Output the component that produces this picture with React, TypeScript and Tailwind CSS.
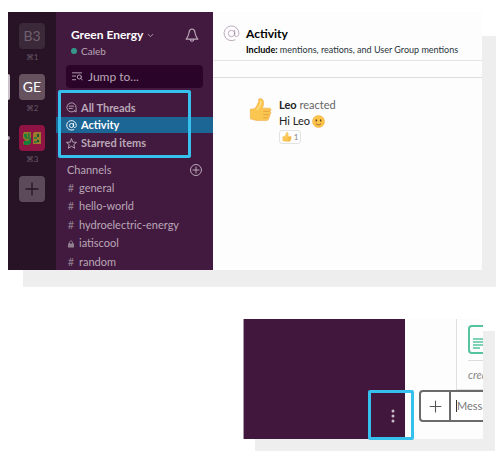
import type { ReactNode } from "react";

const workspaces = [
  { name: "B3", hint: "⌘1", style: "bg-[#3b2838] text-[#6f6170]" },
  { name: "GE", hint: "⌘2", style: "bg-[#66525f] text-white" },
];

const channels = ["general", "hello-world", "hydroelectric-energy", "iatiscool", "random"];

function Icon({ className, children }: { className: string; children: ReactNode }) {
  return (
    <svg viewBox="0 0 24 24" fill="none" stroke="currentColor" strokeWidth="2" strokeLinecap="round" strokeLinejoin="round" className={`shrink-0 ${className}`} aria-hidden="true">
      {children}
    </svg>
  );
}

function AtSign({ className }: { className: string }) {
  return (
    <Icon className={className}>
      <circle cx="12" cy="12" r="4.5" />
      <path d="M16.5 7.5V14c0 4 6 3 6-2A10.500 10.500 0 1 0 17 21" />
    </Icon>
  );
}

function Thumb({ className }: { className: string }) {
  return (
    <svg viewBox="0 0 24 26" className={`shrink-0 ${className}`} aria-hidden="true">
      <path d="M1 12c4 0 6-1 7-4 1-2 2-3 2-6 0-2 4-2 5 1 1 3 0 6-1 8h7c3 0 3 3 1 3.500 2 .5 1.500 3.500-.5 3.500 1.500 1 .5 3.500-1 3.500 1 1 0 3-2 3H11c-4 0-7-1-10-2Z" fill="#fbc650" stroke="#edaa42" strokeWidth=".6" />
      <path d="M15 14.500h7M15 18h6.500M15 21.500h5" stroke="#df9636" strokeWidth=".8" fill="none" />
      <path d="M12 3c1 4-1 7-4 10" stroke="#ffe08a" strokeWidth="1.500" fill="none" />
    </svg>
  );
}

function Smile({ className }: { className: string }) {
  return (
    <svg viewBox="0 0 24 24" className={className} aria-hidden="true">
      <circle cx="12" cy="12" r="11" fill="#fdc64b" stroke="#efa435" />
      <ellipse cx="8" cy="10" rx="1.500" ry="2.200" fill="#71421f" />
      <ellipse cx="16" cy="10" rx="1.500" ry="2.200" fill="#71421f" />
      <path d="M7 16c3 3 7 3 10 0" stroke="#8b5426" strokeWidth="1.500" fill="none" />
    </svg>
  );
}

function Rail() {
  return (
    <nav aria-label="Workspaces" className="relative flex w-12 shrink-0 flex-col items-center bg-[#271226] pt-[11px] text-[#655564]">
      <span className="absolute top-[62px] left-0 h-[26px] w-[2px] rounded-r bg-[#c9c1c8]" />
      <span className="absolute top-[124px] left-0 h-[4px] w-[2px] rounded-r bg-[#a89ca7]" />
      {workspaces.map((w) => (
        <div key={w.name} className="flex h-[51px] flex-col items-center">
          <button className={`h-[26px] w-[26px] rounded text-[14px] leading-[26px] ${w.style}`}>{w.name}</button>
          <span className="mt-[2px] text-[8px] leading-3">{w.hint}</span>
        </div>
      ))}
      <div className="flex h-[51px] flex-col items-center">
        <button aria-label="Third workspace" className="h-[26px] w-[26px] overflow-hidden rounded bg-[#8f1444]">
          <svg viewBox="0 0 26 26" aria-hidden="true">
            <path d="M5 7h7v10l-2 3H5l-1-3 3-1-3-3V9Z" fill="#8a7a2a" />
            <path d="M15 7h7v12h-8V9Z" fill="#9a7a2c" />
            <path d="M5 9h3v3H5ZM5 16h4l3-4v6l-3 2H5Z" fill="#15803a" />
            <path d="M10 8v5H6M15 13h3M15 17h3" stroke="#1f7a37" strokeWidth="1.500" fill="none" />
            <path d="M19 9v3M19 15v2" stroke="#1b5532" strokeWidth="2" />
          </svg>
        </button>
        <span className="mt-[2px] text-[8px] leading-3">⌘3</span>
      </div>
      <button aria-label="Add workspace" className="flex h-[26px] w-[26px] items-center justify-center rounded bg-[#5c4a5a] text-[#291428]">
        <Icon className="h-[16px] w-[16px]"><path d="M12 3v18M3 12h18" /></Icon>
      </button>
    </nav>
  );
}

function Sidebar() {
  return (
    <aside className="relative w-[157px] shrink-0 bg-[#431a3f] pt-[13px] text-[#b9a7b7]">
      <div className="flex items-start justify-between pr-[14px] pl-[15px]">
        <div>
          <button className="flex items-center gap-1 text-[12px] leading-5 font-bold text-white">
            Green Energy
            <Icon className="h-[7px] w-[7px] opacity-60"><path d="m4 8 8 8 8-8" strokeWidth="3" /></Icon>
          </button>
          <div className="flex items-center gap-1 text-[10px] leading-3">
            <span className="h-[6px] w-[6px] rounded-full bg-[#35978a]" />
            Caleb
          </div>
        </div>
        <button aria-label="Notifications" className="mt-[3px]">
          <Icon className="h-[14px] w-[14px]">
            <path d="M2 19c4-4 4-7 5-12 1-7 9-7 10 0 1 5 1 8 5 12ZM9 19c0 5 6 5 6 0" />
          </Icon>
        </button>
      </div>
      <button className="mx-[10px] mt-2 flex h-[23px] w-[137px] items-center gap-[5px] rounded bg-[#2b0529] pl-[6px] text-[12px]">
        <Icon className="h-[11px] w-[11px]"><path d="M1 4h20M1 11h7M1 19h7" /><circle cx="16" cy="13" r="4.500" /><path d="m19 16 4 4" /></Icon>
        Jump to...
      </button>
      <div className="mt-[10px] text-[11px] leading-[18px] font-bold">
        <a href="#threads" className="flex h-[19px] items-center gap-1 pl-[10px]">
          <Icon className="h-[11px] w-[11px]"><path d="M19 19A10 10 0 1 1 22 12v10l-4-3M7 9h10M7 14h7" /></Icon>
          All Threads
        </a>
        <a href="#activity" className="flex h-4 items-center gap-1 bg-[#1c6696] pl-[10px] text-white">
          <AtSign className="h-[11px] w-[11px]" />
          Activity
        </a>
        <a href="#starred" className="flex h-5 items-center gap-1 pl-[10px]">
          <Icon className="h-[11px] w-[11px]"><path d="m12 2 3 7 8 .5-6 5 2 8-7-4.500-7 4.500 2-8-6-5L9 9Z" /></Icon>
          Starred items
        </a>
      </div>
      <div className="mt-2 flex h-[18px] items-center justify-between pr-[11px] pl-[11px] text-[11px]">
        Channels
        <button aria-label="Add channel">
          <Icon className="h-[12px] w-[12px]"><circle cx="12" cy="12" r="11" /><path d="M12 6v12M6 12h12" /></Icon>
        </button>
      </div>
      <ul className="flex h-[92px] flex-col justify-between text-[11px]">
        {channels.map((c) => (
          <li key={c}>
            <a href={`#${c}`} className="flex h-[18px] items-center gap-1 pl-[11px]">
              <span className="flex w-[8px] justify-center text-[#917e8f]">
                {c === "iatiscool" ? (
                  <svg viewBox="0 0 12 14" className="h-[8px] w-[6px]" aria-hidden="true"><path d="M0 6h12v8H0Z" fill="currentColor" /><path d="M3 7V4c0-4 6-4 6 0v3" fill="none" stroke="currentColor" strokeWidth="2" /></svg>
                ) : "#"}
              </span>
              {c}
            </a>
          </li>
        ))}
      </ul>
      <div className="pointer-events-none absolute top-[78px] left-[2px] h-[68px] w-[133px] rounded-[2px] border-[3px] border-[#36c0ed]" />
    </aside>
  );
}

function ActivityPane() {
  return (
    <section className="min-w-0 flex-1">
      <header className="flex h-[49px] gap-[6px] border-b border-[#e5e3e5] pt-[13px] pl-[10px]">
        <AtSign className="h-[17px] w-[17px] stroke-1 text-[#a58aa3]" />
        <div>
          <h1 className="text-[12px] leading-[18px] font-bold text-black">Activity</h1>
          <p className="text-[9px] leading-[14px] whitespace-nowrap text-[#29333a]"><b className="text-black">Include:</b> mentions, reations, and User Group mentions</p>
        </div>
      </header>
      <div className="h-[17px] border-b border-[#dddddd]" />
      <article className="flex gap-[7px] pt-[19px] pl-9 text-[11px] leading-4 text-[#222]">
        <Thumb className="mt-px h-6 w-[23px]" />
        <div>
          <p className="text-[#666]"><b className="text-[#222]">Leo</b> reacted</p>
          <p className="flex items-center gap-[2px]">Hi Leo <Smile className="h-[13px] w-[13px]" /></p>
          <button className="mt-px flex h-[14px] w-[22px] items-center justify-center gap-[2px] rounded-[3px] border border-[#e2e2e2] text-[8px] text-[#888]">
            <Thumb className="h-[10px] w-[10px]" />1
          </button>
        </div>
      </article>
    </section>
  );
}

function ComposerWindow() {
  return (
    <section aria-label="Message composer" className="relative mt-[49px] mr-[13px] ml-auto flex h-[120px] w-[240px] bg-[#fdfdfd] shadow-[12px_12px_0_#eeeeee]">
      <div className="w-[162px] shrink-0 border-l border-[#a894a6] bg-[#41173d]" />
      <div className="flex min-w-0 flex-1 flex-col overflow-hidden pl-[14px]">
        <div className="ml-[37px] h-[71px] w-20 border-b border-l border-[#dfdfdf] pt-[6px] pl-[11px]">
          <div className="border-b border-[#dddddd]">
            <svg viewBox="0 0 26 29" className="mb-[6px] h-[29px] w-[26px]" fill="none" stroke="#55c39e" strokeWidth="2" aria-hidden="true">
              <rect x="1" y="1" width="24" height="27" rx="3" />
              <path d="M5 14h15M5 17h15M5 20h15M5 23h7" strokeWidth="1.500" />
            </svg>
          </div>
          <p className="mt-[6px] text-[11px] leading-4 text-[#888] italic">created</p>
        </div>
        <div className="flex h-8 w-[160px] rounded-[4px] border-2 border-[#6b6b6b] bg-white">
          <button aria-label="Attach" className="flex w-[30px] shrink-0 items-center justify-center border-r-2 border-[#6b6b6b] text-[#555]">
            <Icon className="h-[13px] w-[13px]"><path d="M12 2v20M2 12h20" /></Icon>
          </button>
          <div className="my-[8px] ml-[5px] w-px bg-[#333]" />
          <input aria-label="Message" placeholder="Message" className="min-w-0 flex-1 text-[11px] outline-none placeholder:text-[#777]" />
        </div>
      </div>
      <button aria-label="More actions" className="absolute top-[71px] left-[125px] flex h-[50px] w-[46px] items-center justify-center rounded-[2px] border-[3px] border-[#36c0ed] pl-1 text-[#c8bbc7]">
        <svg viewBox="0 0 4 14" className="mt-[2px] h-[14px] w-[4px]" fill="currentColor" aria-hidden="true"><circle cx="2" cy="2" r="1.500" /><circle cx="2" cy="7" r="1.500" /><circle cx="2" cy="12" r="1.500" /></svg>
      </button>
    </section>
  );
}

export default function App() {
  return (
    <main className="bg-white pt-3 pr-2 pb-5 pl-2 font-[Lato,sans-serif]">
      <div className="relative isolate mr-[14px]">
        <div className="absolute top-6 -right-[14px] -bottom-[17px] left-[15px] -z-10 bg-[#eeeeee]" />
        <section aria-label="Workspace" className="flex h-[258px] overflow-hidden bg-[#fdfdfd]">
          <Rail />
          <Sidebar />
          <ActivityPane />
        </section>
      </div>
      <ComposerWindow />
    </main>
  );
}
